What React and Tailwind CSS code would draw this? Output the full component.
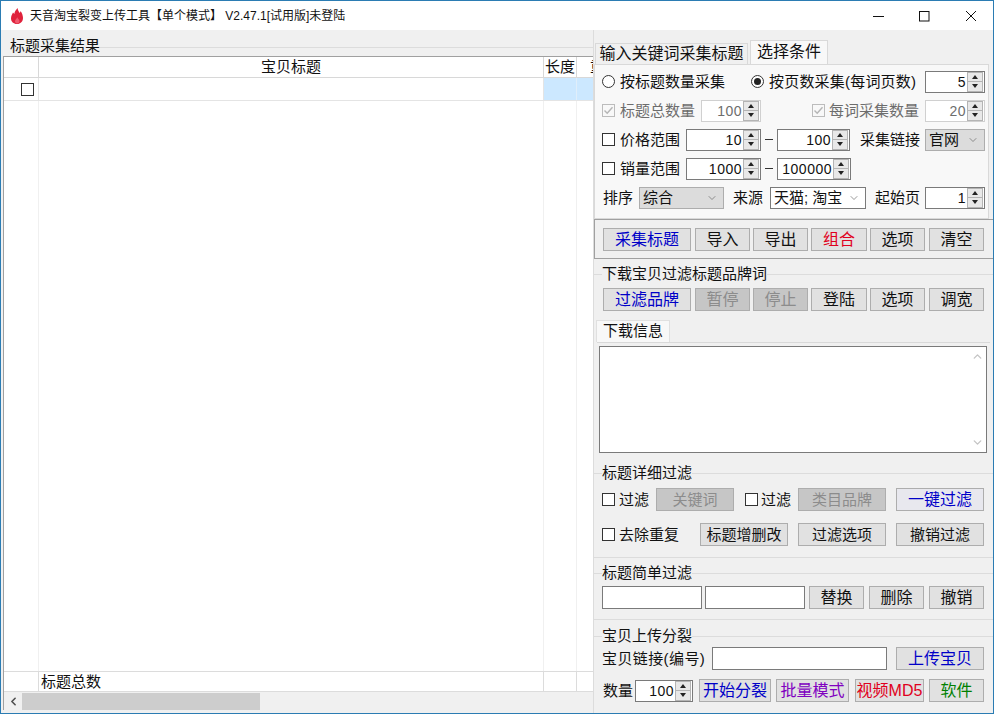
import React from 'react';
import { ChevronDown, ChevronUp, ChevronLeft } from 'lucide-react';

const Btn = ({ className = '', off, small, light, children }) => (
  <button
    type="button"
    className={`h-[23px] shrink-0 border border-[#adadad] leading-[21px] ${small ? 'text-[15px]' : 'text-[16px]'} ${off ? 'bg-[#c6c6c6] text-[#8c8c8c]' : light ? 'bg-[#e8e8ee]' : 'bg-[#e1e1e1]'} ${className}`}
  >
    {children}
  </button>
);

const Lbl = ({ className = '', children }) => (
  <span className={`shrink-0 whitespace-nowrap text-[15px] leading-[20px] ${className}`}>{children}</span>
);

const Box = ({ className = '', checked, off }) => (
  <span className={`flex h-[13px] w-[13px] shrink-0 items-center justify-center border ${off ? 'border-[#bcbcbc]' : 'border-[#333333] bg-white'} ${className}`}>
    {checked && (
      <svg width="11" height="11" viewBox="0 0 11 11" fill="none">
        <path d="M1.5 5.5 L4.2 8.2 L9.5 2.2" stroke="#b5b5b5" strokeWidth="1.4" />
      </svg>
    )}
  </span>
);

const Radio = ({ className = '', on }) => (
  <span className={`flex h-[13px] w-[13px] shrink-0 items-center justify-center rounded-full border border-[#333333] bg-white ${className}`}>
    {on && <span className="h-[7px] w-[7px] rounded-full bg-[#222222]" />}
  </span>
);

const Spin = ({ className = '', value, off }) => (
  <div className={`flex h-[22px] shrink-0 items-center border bg-white ${off ? 'border-[#d0d0d0] text-[#6d6d6d]' : 'border-[#7a7a7a]'} ${className}`}>
    <span className="flex-1 text-right text-[14px] leading-[20px] tracking-[0.5px]">{value}</span>
    <div className="ml-[1px] mr-[1px] flex w-[16px] shrink-0 flex-col">
      <span className="flex h-[10px] items-center justify-center border border-[#b4b4b4] bg-[#e8e8e8]">
        <span className="h-0 w-0 border-x-[3px] border-b-[4px] border-x-transparent border-b-[#222222]" />
      </span>
      <span className="flex h-[10px] items-center justify-center border border-t-0 border-[#b4b4b4] bg-[#e8e8e8]">
        <span className="h-0 w-0 border-x-[3px] border-t-[4px] border-x-transparent border-t-[#222222]" />
      </span>
    </div>
  </div>
);

const Pick = ({ className = '', value, gray }) => (
  <div className={`flex h-[22px] shrink-0 items-center border pl-[3px] pr-[5px] ${gray ? 'border-[#adadad] bg-[#dcdcdc]' : 'border-[#7a7a7a] bg-white'} ${className}`}>
    <span className="flex-1 whitespace-nowrap text-[15px] leading-[20px]">{value}</span>
    <ChevronDown size={12} strokeWidth={1.2} className="shrink-0 text-[#555555]" />
  </div>
);

const GroupTitle = ({ className = '', children }) => (
  <div className={`flex h-[20px] items-center ${className}`}>
    <span className="h-[1px] w-[8px] bg-[#dcdcdc]" />
    <Lbl>{children}</Lbl>
    <span className="h-[1px] flex-1 bg-[#dcdcdc]" />
  </div>
);

const Text = ({ className = '' }) => <div className={`h-[23px] shrink-0 border border-[#7a7a7a] bg-white ${className}`} />;

function Flame() {
  return (
    <svg width="12" height="16" viewBox="0 0 12 16" className="ml-[10px] shrink-0">
      <path d="M6.500 0 C7 2.500 8 3.500 8.500 5 C9 4.500 9.500 4 9.500 3 C11 5 12 7.500 12 10 C12 13.500 9.500 16 6 16 C2.500 16 0 13.500 0 10.500 C0 8 1 6.500 2 4.500 C2.500 5 3 5.500 3.300 6 C3.500 3.500 5 2 6.500 0 Z" fill="#e0223c" />
      <path d="M6 9 C6.500 10.500 4 11.500 4 13.500 C4 14.800 5 15.500 6 15.500 C7.500 15.500 8.500 14.500 8.500 13 C8.500 11.500 6.500 10.500 6 9 Z" fill="#ef5a6e" />
    </svg>
  );
}

function WinButtons() {
  return (
    <div className="ml-auto flex items-center">
      <svg width="14" height="14" viewBox="0 0 14 14" className="shrink-0">
        <path d="M1 7.500 H12" stroke="#111111" strokeWidth="1" />
      </svg>
      <svg width="14" height="14" viewBox="0 0 14 14" className="ml-[32px] shrink-0">
        <rect x="1.500" y="2.500" width="9.500" height="9.500" fill="none" stroke="#111111" strokeWidth="1" />
      </svg>
      <svg width="14" height="14" viewBox="0 0 14 14" className="ml-[32px] mr-[15px] shrink-0">
        <path d="M2 2 L12 12 M12 2 L2 12" stroke="#111111" strokeWidth="1" />
      </svg>
    </div>
  );
}

function ResultTable() {
  return (
    <div className="flex w-[592px] shrink-0 flex-col">
      <div className="flex h-[26px] items-end">
        <span className="mb-[1px] ml-[9px] whitespace-nowrap text-[15px] leading-[18px]">标题采集结果</span>
        <span className="mb-[8px] h-[1px] flex-1 bg-[#dcdcdc]" />
      </div>
      <div className="ml-[2px] flex flex-1 flex-col border-l border-t border-[#a0a0a0] bg-white">
        <div className="flex h-[21px] border-b border-[#d8d8d8] text-[15px] leading-[20px]">
          <div className="w-[35px] shrink-0 border-r border-[#d8d8d8]" />
          <div className="w-[505px] shrink-0 border-r border-[#d8d8d8] text-center">宝贝标题</div>
          <div className="w-[33px] shrink-0 border-r border-[#d8d8d8] text-center">长度</div>
          <div className="min-w-0 flex-1 overflow-hidden whitespace-nowrap pl-[13px]">重</div>
        </div>
        <div className="flex h-[23px] border-b border-[#e4e4e4]">
          <div className="flex w-[35px] shrink-0 items-center justify-end border-r border-[#e4e4e4] pr-[4px]">
            <Box />
          </div>
          <div className="w-[505px] shrink-0 border-r border-[#e4e4e4]" />
          <div className="w-[33px] shrink-0 border-r border-[#e0eefa] bg-[#cce8ff]" />
          <div className="flex-1 bg-[#cce8ff]" />
        </div>
        <div className="flex flex-1">
          <div className="w-[35px] shrink-0 border-r border-[#f0f0f0]" />
          <div className="w-[505px] shrink-0 border-r border-[#f0f0f0]" />
          <div className="w-[33px] shrink-0 border-r border-[#f0f0f0]" />
        </div>
        <div className="flex h-[21px] border-y border-[#dcdcdc] text-[15px] leading-[19px]">
          <div className="w-[35px] shrink-0 border-r border-[#dcdcdc]" />
          <div className="w-[505px] shrink-0 border-r border-[#dcdcdc] pl-[2px]">标题总数</div>
          <div className="w-[33px] shrink-0 border-r border-[#dcdcdc]" />
        </div>
        <div className="flex h-[18px] items-center bg-[#f0f0f0]">
          <ChevronLeft size={13} strokeWidth={3} className="ml-[3px] shrink-0 text-[#505050]" />
          <div className="ml-[2px] h-[17px] w-[238px] bg-[#cdcdcd]" />
        </div>
      </div>
      <div className="h-[3px]" />
    </div>
  );
}

function ConditionTabs() {
  return (
    <>
      <div className="mt-[10px] flex h-[24px] items-end pl-[1px]">
        <div className="h-[21px] w-[153px] border border-b-0 border-[#d9d9d9] bg-[#f0f0f0] text-center text-[16px] leading-[20px]">输入关键词采集标题</div>
        <div className="ml-[2px] h-[24px] w-[78px] border border-b-0 border-[#d9d9d9] bg-[#f8f8f8] text-center text-[16px] leading-[21px]">选择条件</div>
      </div>
      <div className="mr-[4px] h-[155px] border border-[#d9d9d9] bg-[#f8f8f8] pt-[2px]">
        <div className="flex h-[29px] items-center">
          <Radio className="ml-[7px]" />
          <Lbl className="ml-[5px] w-[105px]">按标题数量采集</Lbl>
          <Radio on className="ml-[26px]" />
          <Lbl className="ml-[5px] w-[156px] tracking-[0.2px]">按页数采集(每词页数)</Lbl>
          <Spin value="5" className="w-[60px]" />
        </div>
        <div className="flex h-[29px] items-center text-[#6d6d6d]">
          <Box off checked className="ml-[7px]" />
          <Lbl className="ml-[5px] w-[81px]">标题总数量</Lbl>
          <Spin off value="100" className="w-[60px]" />
          <Box off checked className="ml-[51px]" />
          <Lbl className="ml-[4px] w-[96px]">每词采集数量</Lbl>
          <Spin off value="20" className="w-[60px]" />
        </div>
        <div className="flex h-[29px] items-center">
          <Box className="ml-[7px]" />
          <Lbl className="ml-[5px] w-[66px]">价格范围</Lbl>
          <Spin value="10" className="w-[75px]" />
          <span className="ml-[4px] h-[1px] w-[8px] bg-[#333333]" />
          <Spin value="100" className="ml-[4px] w-[73px]" />
          <Lbl className="ml-[10px] w-[65px]">采集链接</Lbl>
          <Pick gray value="官网" className="w-[60px]" />
        </div>
        <div className="flex h-[29px] items-center">
          <Box className="ml-[7px]" />
          <Lbl className="ml-[5px] w-[66px]">销量范围</Lbl>
          <Spin value="1000" className="w-[75px]" />
          <span className="ml-[4px] h-[1px] w-[8px] bg-[#333333]" />
          <Spin value="100000" className="ml-[4px] w-[74px]" />
        </div>
        <div className="flex h-[29px] items-center">
          <Lbl className="ml-[8px] w-[36px]">排序</Lbl>
          <Pick gray value="综合" className="w-[85px]" />
          <Lbl className="ml-[9px] w-[37px]">来源</Lbl>
          <Pick value="天猫; 淘宝" className="w-[96px]" />
          <Lbl className="ml-[9px] w-[50px]">起始页</Lbl>
          <Spin value="1" className="w-[60px]" />
        </div>
      </div>
    </>
  );
}

function DownloadInfo() {
  return (
    <>
      <div className="mt-[9px] ml-[2px] h-[22px] w-[74px] border border-b-0 border-[#e0e0e0] bg-[#f8f8f8] text-center text-[15px] leading-[20px]">下载信息</div>
      <div className="ml-[3px] mr-[3px] h-[113px] border-t border-[#d9d9d9] pl-[2px] pr-[3px] pt-[3px]">
        <div className="flex h-[107px] border border-[#7a7a7a] bg-white">
          <div className="ml-auto flex w-[17px] flex-col items-center justify-between py-[3px] text-[#c4c4c4]">
            <ChevronUp size={13} strokeWidth={2.5} />
            <ChevronDown size={13} strokeWidth={2.5} />
          </div>
        </div>
      </div>
    </>
  );
}

export default function App() {
  return (
    <div className="flex h-[714px] w-[994px] flex-col overflow-hidden border border-[#2b7cb3] bg-[#f0f0f0] font-['Liberation_Sans','Noto_Sans_CJK_SC',sans-serif] text-[#111111]">
      <div className="flex h-[29px] shrink-0 items-center bg-white">
        <Flame />
        <span className="ml-[7px] whitespace-nowrap text-[12px]">天音淘宝裂变上传工具【单个模式】 V2.47.1[试用版]未登陆</span>
        <WinButtons />
      </div>
      <div className="flex flex-1">
        <ResultTable />
        <div className="flex w-[400px] shrink-0 flex-col border-l border-[#dcdcdc]">
          <ConditionTabs />

          <div className="flex h-[40px] items-center border border-r-0 border-[#a0a0a0] pl-[8px]">
            <Btn className="w-[88px] text-[#0000c8]">采集标题</Btn>
            <Btn className="ml-[4px] w-[55px]">导入</Btn>
            <Btn className="ml-[3px] w-[55px]">导出</Btn>
            <Btn className="ml-[3px] w-[56px] text-[#e00020]">组合</Btn>
            <Btn className="ml-[3px] w-[55px]">选项</Btn>
            <Btn className="ml-[4px] w-[55px]">清空</Btn>
          </div>

          <GroupTitle className="mt-[5px]">下载宝贝过滤标题品牌词</GroupTitle>
          <div className="mt-[4px] flex pl-[9px]">
            <Btn className="w-[88px] text-[#0000c8]">过滤品牌</Btn>
            <Btn off className="ml-[4px] w-[55px]">暂停</Btn>
            <Btn off className="ml-[3px] w-[55px]">停止</Btn>
            <Btn className="ml-[3px] w-[56px]">登陆</Btn>
            <Btn className="ml-[3px] w-[55px]">选项</Btn>
            <Btn className="ml-[4px] w-[55px]">调宽</Btn>
          </div>

          <DownloadInfo />

          <GroupTitle className="mt-[8px]">标题详细过滤</GroupTitle>
          <div className="mt-[5px] flex items-center pl-[8px]">
            <Box />
            <Lbl className="ml-[4px] w-[37px]">过滤</Lbl>
            <Btn off small className="w-[78px]">关键词</Btn>
            <Box className="ml-[11px]" />
            <Lbl className="ml-[3px] w-[37px]">过滤</Lbl>
            <Btn off small className="w-[88px]">类目品牌</Btn>
            <Btn light className="ml-[10px] w-[88px] text-[#0000c8]">一键过滤</Btn>
          </div>
          <div className="mt-[12px] flex items-center pl-[8px]">
            <Box />
            <Lbl className="ml-[4px] w-[81px]">去除重复</Lbl>
            <Btn small className="w-[88px]">标题增删改</Btn>
            <Btn small className="ml-[10px] w-[88px]">过滤选项</Btn>
            <Btn small className="ml-[10px] w-[88px]">撤销过滤</Btn>
          </div>
          <div className="mt-[11px] h-[1px] bg-[#dcdcdc]" />

          <GroupTitle className="mt-[5px]">标题简单过滤</GroupTitle>
          <div className="mt-[3px] flex items-center pl-[8px]">
            <Text className="w-[100px]" />
            <Text className="ml-[3px] w-[100px]" />
            <Btn className="ml-[4px] w-[55px]">替换</Btn>
            <Btn className="ml-[5px] w-[55px]">删除</Btn>
            <Btn className="ml-[5px] w-[55px]">撤销</Btn>
          </div>
          <div className="mt-[10px] h-[1px] bg-[#dcdcdc]" />

          <GroupTitle className="mt-[6px]">宝贝上传分裂</GroupTitle>
          <div className="mt-[1px] flex items-center pl-[8px]">
            <Lbl className="w-[110px] tracking-[0.4px]">宝贝链接(编号)</Lbl>
            <Text className="w-[175px]" />
            <Btn className="ml-[9px] w-[88px] text-[#0000c8]">上传宝贝</Btn>
          </div>
          <div className="mt-[9px] flex items-center pl-[9px]">
            <Lbl className="w-[32px]">数量</Lbl>
            <Spin value="100" className="w-[58px]" />
            <Btn className="ml-[6px] w-[72px] text-[#0000c8]">开始分裂</Btn>
            <Btn className="ml-[5px] w-[73px] text-[#8000c0]">批量模式</Btn>
            <Btn className="ml-[6px] w-[69px] text-[#e00020]">视频MD5</Btn>
            <Btn className="ml-[5px] w-[55px] text-[#008000]">软件</Btn>
          </div>
        </div>
      </div>
    </div>
  );
}
